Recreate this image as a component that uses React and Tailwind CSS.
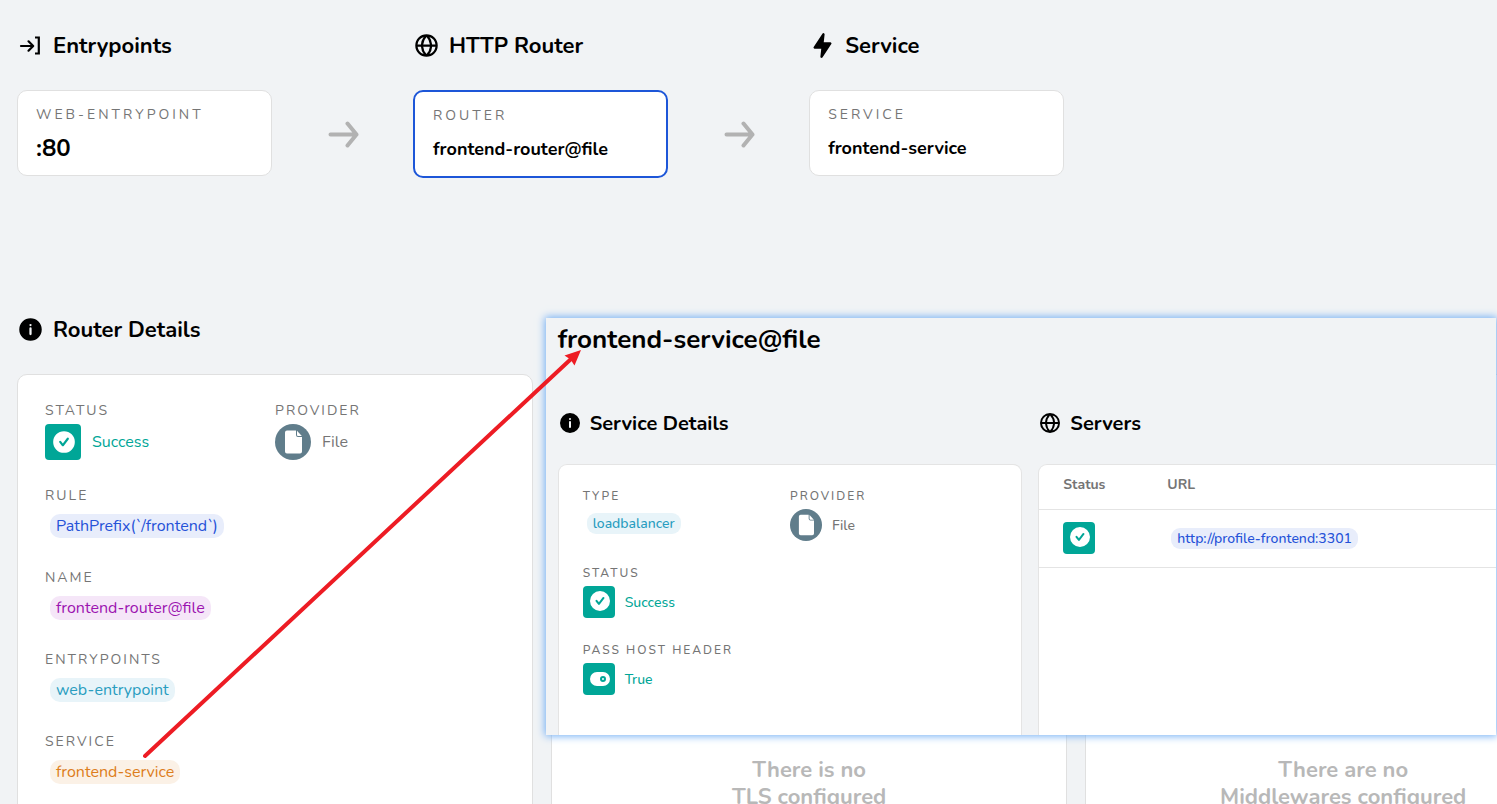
const ICONS = {
  globe:
    'M22 12A10 10 0 0 0 12 2a10 10 0 0 0 0 20 10 10 0 0 0 10-10zm-2.07-1H17a12.91 12.91 0 0 0-2.33-6.54A8 8 0 0 1 19.93 11zM9.08 13H15a11.44 11.44 0 0 1-3 6.61A11 11 0 0 1 9.08 13zm0-2A11.4 11.4 0 0 1 12 4.4a11.19 11.19 0 0 1 3 6.6zm.36-6.57A13.18 13.18 0 0 0 7.07 11h-3a8 8 0 0 1 5.37-6.57zM4.09 13h3a12.86 12.86 0 0 0 2.35 6.56A8 8 0 0 1 4.09 13zm10.55 6.55A13.14 13.14 0 0 0 17 13h2.95a8 8 0 0 1-5.31 6.55z',
  flash:
    'M11.11 23a1 1 0 0 1-.34-.06 1 1 0 0 1-.65-1.05l.77-7.09H5a1 1 0 0 1-.83-1.56l7.89-11.8a1 1 0 0 1 1.17-.38 1 1 0 0 1 .65 1l-.77 7.14H19a1 1 0 0 1 .83 1.56l-7.89 11.8a1 1 0 0 1-.83.44z',
  info: 'M12 2a10 10 0 1 0 10 10A10 10 0 0 0 12 2zm1 14a1 1 0 0 1-2 0v-5a1 1 0 0 1 2 0zm-1-7a1 1 0 1 1 1-1 1 1 0 0 1-1 1z',
  check:
    'M12 2a10 10 0 1 0 10 10A10 10 0 0 0 12 2zm4.3 7.61l-4.57 6a1 1 0 0 1-.79.39 1 1 0 0 1-.79-.38l-2.44-3.11a1 1 0 0 1 1.58-1.23l1.63 2.08 3.78-5a1 1 0 1 1 1.6 1.22z',
  toggle:
    'M15 5H9a7 7 0 0 0 0 14h6a7 7 0 0 0 0-14zm0 10a3 3 0 1 1 3-3 3 3 0 0 1-3 3zM15 11a1 1 0 1 0 1 1 1 1 0 0 0-1-1z',
};

function Icon({ name, className }) {
  return (
    <svg viewBox="0 0 24 24" fill="currentColor" aria-hidden="true" className={className}>
      <path fillRule="evenodd" d={ICONS[name]} />
    </svg>
  );
}

function EntryIcon({ className }) {
  return (
    <svg viewBox="0 0 27 27" fill="none" stroke="currentColor" strokeWidth="2.2" aria-hidden="true" className={className}>
      <path d="M4 14h12M11.500 9.300l4.700 4.700-4.700 4.700" strokeLinecap="round" strokeLinejoin="round" />
      <path d="M18 5.500h3.800v16h-3.800" />
    </svg>
  );
}

function FlowArrow() {
  return (
    <div className="flex w-[141px] shrink-0 justify-center pt-[29px]">
      <svg viewBox="0 0 32 30" fill="none" stroke="#b2b2b2" strokeWidth="4" strokeLinecap="round" strokeLinejoin="round" aria-hidden="true" className="h-[30px] w-8">
        <path d="M3.500 15.500h26M20.500 4.500l9 11-9 11" />
      </svg>
    </div>
  );
}

function Heading({ icon, small, children }) {
  const size = small ? 'size-6' : 'size-[27px]';
  return (
    <h2 className={small ? 'flex h-6 items-center gap-2 text-[20px] leading-6 font-bold' : 'flex h-[26px] items-center gap-[9px] text-[22px] leading-6 font-bold'}>
      {icon === 'entry' ? <EntryIcon className={size} /> : <Icon name={icon} className={size} />}
      <span className="pt-[2px]">{children}</span>
    </h2>
  );
}

function FlowStep({ icon, title, label, value, active, large, last }) {
  return (
    <section>
      <Heading icon={icon}>{title}</Heading>
      <div className="mt-8 flex items-start">
        <a
          href="#details"
          className={
            active
              ? 'block min-w-0 flex-1 rounded-[10px] border-2 border-[#1d56d8] bg-white px-[18px] pt-[14px] pb-[13px]'
              : 'block min-w-0 flex-1 rounded-[10px] border border-[#e0e0e0] bg-white px-[18px] pt-[14px] pb-[13px]'
          }
        >
          <div className="text-[14px] leading-5 tracking-[3px] text-[#757575]">{label}</div>
          <div className={large ? 'mt-[9px] text-[24px] leading-7 font-bold' : 'mt-[9px] text-[18px] leading-7 font-bold'}>{value}</div>
        </a>
        {last ? <div className="w-[141px] shrink-0" /> : <FlowArrow />}
      </div>
    </section>
  );
}

function Label({ small, children }) {
  return (
    <dt className={small ? 'text-[12px] leading-[18px] font-medium tracking-[2px] text-[#757575]' : 'text-[14px] leading-5 tracking-[2px] text-[#757575]'}>
      {children}
    </dt>
  );
}

const TONES = {
  blue: 'bg-[#e8edfb] text-[#2552d8]',
  purple: 'bg-[#f5e6f8] text-[#9c14b0]',
  cyan: 'bg-[#e8f4f9] text-[#299dc0]',
  orange: 'bg-[#fbf1e6] text-[#dd7d1b]',
};

function Pill({ tone, small, children }) {
  return (
    <span className={`${TONES[tone]} ${small ? 'ml-1 inline-flex h-[21px] items-center rounded-[9px] px-[6px] text-[14px] font-medium' : 'ml-[5px] inline-flex h-6 items-center rounded-[10px] px-[6px] text-[16px]'}`}>
      {children}
    </span>
  );
}

function Badge({ icon, small }) {
  return (
    <span className={small ? 'flex size-8 items-center justify-center rounded-[4px] bg-[#00a697] pl-[2px] text-white' : 'flex size-9 items-center justify-center rounded-[4px] bg-[#00a697] pl-[2px] text-white'}>
      <Icon name={icon} className={`${small ? 'size-6' : 'size-[26px]'} ${small && icon === 'check' ? 'mb-[3px]' : ''}`} />
    </span>
  );
}

function FileBadge({ small }) {
  return (
    <svg viewBox="0 0 36 36" aria-hidden="true" className={small ? 'size-8' : 'size-9'}>
      <circle cx="18" cy="18" r="18" fill="#607d8b" />
      <path d="M12 6.500h9v4.500a2 2 0 0 0 2 2h4v14.500a2 2 0 0 1-2 2H12a2 2 0 0 1-2-2v-19a2 2 0 0 1 2-2z" fill="#fff" />
      <path d="M22 6.800l4.800 5.200h-3.800a1 1 0 0 1-1-1z" fill="#fff" />
    </svg>
  );
}

function IconRow({ badge, text, green, small }) {
  return (
    <dd className={`flex items-center ${small ? 'gap-[10px] text-[14px] font-medium' : 'gap-[11px] text-[16px]'} ${green ? 'text-[#00a697]' : 'text-[#757575]'}`}>
      {badge}
      {text}
    </dd>
  );
}

function PillField({ label, tone, children }) {
  return (
    <div>
      <Label>{label}</Label>
      <dd className="mt-2 flex">
        <Pill tone={tone}>{children}</Pill>
      </dd>
    </div>
  );
}

function EmptyCard({ first, second }) {
  return (
    <section className="mt-[58px] rounded-[10px] border border-[#e0e0e0] bg-white pt-[382px] text-center text-[22px] leading-[27px] font-bold text-[#b8b8b8]">
      {first}
      <br />
      {second}
    </section>
  );
}

function ServicePanel() {
  return (
    <div className="absolute top-[318px] right-px bottom-[69px] left-[36.45%] overflow-hidden bg-[#f1f3f5] shadow-[0_0_8px_1px_#6fadf5]">
      <div className="flex h-full w-[102%] flex-col px-3 pt-[6px]">
        <h1 className="text-[26px] leading-8 font-bold">frontend-service@file</h1>
        <div className="mt-[55px] grid min-h-0 flex-1 grid-cols-2 gap-4">
          <section className="flex flex-col">
            <Heading icon="info" small>Service Details</Heading>
            <dl className="mt-[29px] grid flex-1 grid-cols-2 content-start rounded-t-[9px] border border-b-0 border-[#e4e4e4] bg-white px-6 pt-[22px]">
              <div>
                <Label small>TYPE</Label>
                <dd className="mt-2 flex">
                  <Pill tone="cyan" small>loadbalancer</Pill>
                </dd>
              </div>
              <div>
                <Label small>PROVIDER</Label>
                <div className="mt-1">
                  <IconRow badge={<FileBadge small />} text="File" small />
                </div>
              </div>
              <div className="col-span-2 mt-[23px]">
                <Label small>STATUS</Label>
                <div className="mt-1">
                  <IconRow badge={<Badge icon="check" small />} text="Success" green small />
                </div>
              </div>
              <div className="col-span-2 mt-[23px]">
                <Label small>PASS HOST HEADER</Label>
                <div className="mt-1">
                  <IconRow badge={<Badge icon="toggle" small />} text="True" green small />
                </div>
              </div>
            </dl>
          </section>
          <section className="flex flex-col">
            <Heading icon="globe" small>Servers</Heading>
            <div className="mt-[29px] flex-1 rounded-t-[9px] border border-b-0 border-[#e4e4e4] bg-white">
              <table className="w-full text-left text-[14px]">
                <thead>
                  <tr className="h-11 border-b border-[#e4e4e4] text-[#757575]">
                    <th className="w-[104px] pb-1 pl-6 font-bold">Status</th>
                    <th className="pb-1 pl-6 font-bold">URL</th>
                  </tr>
                </thead>
                <tbody>
                  <tr className="h-[58px] border-b border-[#e4e4e4]">
                    <td className="pl-6">
                      <Badge icon="check" small />
                    </td>
                    <td className="pl-6">
                      <Pill tone="blue" small>http://profile-frontend:3301</Pill>
                    </td>
                  </tr>
                </tbody>
              </table>
            </div>
          </section>
        </div>
      </div>
    </div>
  );
}

export default function App() {
  return (
    <main className="relative h-screen overflow-hidden bg-[#f1f3f5] font-['Nunito','Nunito_Sans','Open_Sans',sans-serif] text-black">
      <div className="w-[108.1%] px-[17px] pt-8">
        <div className="grid grid-cols-4">
          <FlowStep icon="entry" title="Entrypoints" label="WEB-ENTRYPOINT" value=":80" large />
          <FlowStep icon="globe" title="HTTP Router" label="ROUTER" value="frontend-router@file" active />
          <FlowStep icon="flash" title="Service" label="SERVICE" value="frontend-service" last />
        </div>
        <div id="details" className="mt-[138px] grid grid-cols-3 gap-[18px]">
          <section>
            <Heading icon="info">Router Details</Heading>
            <dl className="mt-8 rounded-[10px] border border-[#e0e0e0] bg-white px-[27px] pt-[26px] pb-12">
              <div className="grid grid-cols-2">
                <div>
                  <Label>STATUS</Label>
                  <div className="mt-[3px]">
                    <IconRow badge={<Badge icon="check" />} text="Success" green />
                  </div>
                </div>
                <div>
                  <Label>PROVIDER</Label>
                  <div className="mt-[3px]">
                    <IconRow badge={<FileBadge />} text="File" />
                  </div>
                </div>
              </div>
              <div className="mt-[26px] flex flex-col gap-[30px]">
                <PillField label="RULE" tone="blue">PathPrefix(`/frontend`)</PillField>
                <PillField label="NAME" tone="purple">frontend-router@file</PillField>
                <PillField label="ENTRYPOINTS" tone="cyan">web-entrypoint</PillField>
                <PillField label="SERVICE" tone="orange">frontend-service</PillField>
              </div>
            </dl>
          </section>
          <EmptyCard first="There is no" second="TLS configured" />
          <EmptyCard first="There are no" second="Middlewares configured" />
        </div>
      </div>
      <ServicePanel />
      <svg viewBox="0 0 440 410" aria-hidden="true" className="pointer-events-none absolute top-[350px] left-[143px] h-[410px] w-[440px]">
        <path d="M2 406L428 9" stroke="#ed1c24" strokeWidth="4" strokeLinecap="round" />
        <path d="M438 0L431.500 15.500L428.500 11L426 8.500L421.500 5.500Z" fill="#ed1c24" />
      </svg>
    </main>
  );
}
